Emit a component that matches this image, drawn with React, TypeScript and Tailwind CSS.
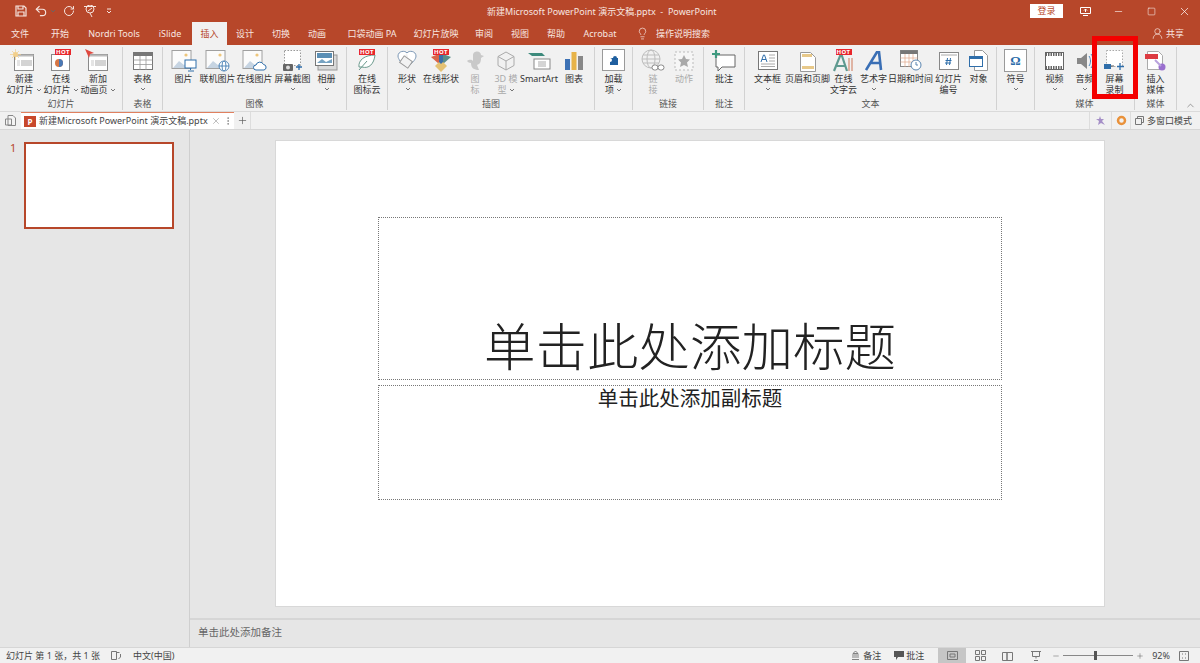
import type { ReactNode } from "react";
import { X, Minus, Square, Plus, Undo2, RotateCw, Lightbulb, UserRound, ChevronUp, MoreVertical } from "lucide-react";

function Chev() {
  return (
    <svg width="6" height="4" viewBox="0 0 6 4" className="inline-block ml-[2px] align-middle">
      <path d="M1 1l2 2 2-2" fill="none" stroke="#666" strokeWidth="0.9" />
    </svg>
  );
}

function Hot({ className }: { className: string }) {
  return (
    <span className={`absolute h-[6px] w-[16px] bg-[#e8262b] text-white text-[6px] leading-[6px] font-bold text-center tracking-[0.5px] ${className}`}>
      HOT
    </span>
  );
}

function Item({ w, lines, icon, chev, dim }: { w: string; lines: string[]; icon: ReactNode; chev?: "inline" | "below"; dim?: boolean }) {
  return (
    <div className={`${w} flex flex-col items-center`}>
      <div className="relative h-[24px] flex items-center justify-center">{icon}</div>
      <div className={`text-[9px] leading-[11px] text-center whitespace-nowrap ${dim ? "text-[#aaa]" : "text-[#333]"}`}>
        {lines.map((l, i) => (
          <div key={i}>
            {l}
            {chev === "inline" && i === lines.length - 1 && <Chev />}
          </div>
        ))}
        {chev === "below" && (
          <div className="leading-[9px]">
            <Chev />
          </div>
        )}
      </div>
    </div>
  );
}

function Group({ w, label, children }: { w: string; label: string; children: ReactNode }) {
  return (
    <div className={`${w} h-[63px] my-auto flex flex-col border-r border-[#d2d2d2] shrink-0`}>
      <div className="h-[50px] pt-[2px] flex justify-center">{children}</div>
      <div className="text-[9px] leading-[13px] text-center text-[#555] pt-[1px]">{label}</div>
    </div>
  );
}

const Slide = ({ accent = "#d4d4d4" }: { accent?: string }) => (
  <svg width="22" height="24" viewBox="0 0 22 24">
    <rect x="1.500" y="5.500" width="19" height="16" fill="#fff" stroke="#8a8a8a" />
    <rect x="1.500" y="5.500" width="19" height="2" fill="#bbb" />
    <rect x="8" y="11" width="11" height="6" fill={accent} />
    <path d="M4 12h3M4 14h3M4 16h3" stroke="#bbb" strokeWidth=".8" />
  </svg>
);

const Pic = ({ badge }: { badge?: ReactNode }) => (
  <svg width="26" height="24" viewBox="0 0 26 24">
    <rect x="1" y="1.500" width="19" height="18" fill="#fbfbfb" stroke="#a0a0a0" />
    <path d="M2 19l6-7 5 4 3-2 4 5z" fill="#c6d4e2" />
    <circle cx="15" cy="6" r="1.600" fill="#eec67c" />
    {badge}
  </svg>
);

export default function App() {
  const tabs: [string, string][] = [
    ["w-[40px]", "文件"],
    ["w-[40px]", "开始"],
    ["w-[68px]", "Nordri Tools"],
    ["w-[44px]", "iSlide"],
  ];
  const tabs2: [string, string][] = [
    ["w-[36px]", "设计"],
    ["w-[36px]", "切换"],
    ["w-[36px]", "动画"],
    ["w-[74px]", "口袋动画 PA"],
    ["w-[54px]", "幻灯片放映"],
    ["w-[42px]", "审阅"],
    ["w-[30px]", "视图"],
    ["w-[42px]", "帮助"],
    ["w-[46px]", "Acrobat"],
  ];

  return (
    <div className="relative w-[1200px] h-[663px] overflow-hidden flex flex-col bg-[#e6e6e6] font-['Noto_Sans','Noto_Sans_CJK_SC',sans-serif]">
      {/* title bar */}
      <div className="h-[22px] bg-[#b7472a] text-white flex items-center shrink-0">
        <div className="w-[487px] flex items-center text-[#f6e5df]">
          <svg width="12" height="12" viewBox="0 0 12 12" className="ml-[15px]">
            <path d="M1 1h8l2 2v8H1zM3 1v3h5V1M3 11V7h6v4" fill="none" stroke="currentColor" strokeWidth="1.200" />
          </svg>
          <Undo2 size={14} strokeWidth={2} className="ml-[7px]" />
          <Chev />
          <RotateCw size={12} strokeWidth={2} className="ml-[7px]" />
          <svg width="14" height="13" viewBox="0 0 14 13" className="ml-[8px]">
            <path d="M1 1.500h12M3 4a4 4 0 0 1 8 0 4 4 0 0 1-4 4 4 4 0 0 1-4-4zM7 8l2 4M5 6l4-3" fill="none" stroke="currentColor" strokeWidth="1" />
          </svg>
          <svg width="6" height="6" viewBox="0 0 6 6" className="ml-[9px]">
            <path d="M1 1h4M1 3l2 2 2-2" fill="none" stroke="currentColor" />
          </svg>
        </div>
        <div className="text-[9px] leading-none text-[#f8e6e0] whitespace-pre">新建Microsoft PowerPoint 演示文稿.pptx  -  PowerPoint</div>
        <div className="ml-auto flex items-center">
          <div className="w-[33px] h-[14px] bg-white text-[#b7472a] text-[9px] leading-[14px] text-center">登录</div>
          <svg width="11" height="9" viewBox="0 0 11 9" className="ml-[17px]">
            <path d="M.5.500h10v6H.5zM5.500 5V2M4 3.500l1.500-1.500L7 3.500M3 8.500h5" fill="none" stroke="#fff" />
          </svg>
          <Minus size={11} strokeWidth={1.300} className="ml-[22px]" />
          <Square size={9} strokeWidth={1.400} className="ml-[23px]" />
          <X size={13} strokeWidth={1.300} className="ml-[22px] mr-[9px]" />
        </div>
      </div>

      {/* tabs */}
      <div className="h-[23px] bg-[#b7472a] flex items-stretch text-[9px] text-[#f8e6e0] shrink-0">
        {tabs.map(([w, t]) => (
          <div key={t} className={`${w} flex items-center justify-center`}>{t}</div>
        ))}
        <div className="w-[35px] bg-[#f1f1f1] text-[#b7472a] flex items-center justify-center">插入</div>
        {tabs2.map(([w, t]) => (
          <div key={t} className={`${w} flex items-center justify-center`}>{t}</div>
        ))}
        <div className="flex items-center ml-[13px]">
          <Lightbulb size={13} strokeWidth={1.300} />
          <span className="ml-[7px]">操作说明搜索</span>
        </div>
        <div className="ml-auto flex items-center mr-[16px]">
          <UserRound size={13} strokeWidth={1.300} />
          <span className="ml-[2px]">共享</span>
        </div>
      </div>

      {/* ribbon */}
      <div className="h-[67px] bg-[#f1f1f1] border-b border-[#dadada] flex items-stretch relative shrink-0">
        <Group w="w-[123px]" label="幻灯片">
          <Item w="w-[37px]" lines={["新建", "幻灯片"]} chev="inline" icon={
            <div className="relative"><Slide /><svg width="11" height="11" viewBox="0 0 11 11" className="absolute -left-[3px] top-0"><circle cx="5.500" cy="5.500" r="2.500" fill="#f2cf8a" /><path d="M5.500 0v11M0 5.500h11M2 2l7 7M9 2l-7 7" stroke="#f2cf8a" strokeWidth=".7" /></svg></div>
          } />
          <Item w="w-[37px]" lines={["在线", "幻灯片"]} chev="inline" icon={
            <div className="relative"><svg width="22" height="24" viewBox="0 0 22 24"><rect x="1.500" y="5.500" width="18" height="16" fill="#fff" stroke="#8a8a8a" /><circle cx="9" cy="14" r="4" fill="#d77745" /><path d="M9 14V10a4 4 0 0 1 0 8z" fill="#4a79b5" /></svg><Hot className="left-[5px] top-0" /></div>
          } />
          <Item w="w-[37px]" lines={["新加", "动画页"]} chev="inline" icon={
            <div className="relative"><Slide /><svg width="10" height="10" viewBox="0 0 10 10" className="absolute -left-[2px] top-0"><path d="M0 0l9 4-4 1-1 4z" fill="#e0483f" /></svg></div>
          } />
        </Group>
        <Group w="w-[40px]" label="表格">
          <Item w="w-[36px]" lines={["表格"]} chev="below" icon={
            <svg width="20" height="18" viewBox="0 0 20 18"><rect x=".5" y=".5" width="19" height="17" fill="#fff" stroke="#777" /><rect x=".5" y=".5" width="19" height="3.500" fill="#777" /><path d="M.5 8h19M.5 12.500h19M7 4v14M13 4v14" stroke="#999" strokeWidth=".8" /></svg>
          } />
        </Group>
        <Group w="w-[184px]" label="图像">
          <Item w="w-[32px]" lines={["图片"]} icon={<Pic badge={<g><rect x="14" y="11" width="11" height="8" fill="#fff" stroke="#2f6eaa" /><path d="M19.500 19v2M17 22h6" stroke="#2f6eaa" /></g>} />} />
          <Item w="w-[36px]" lines={["联机图片"]} icon={<Pic badge={<g fill="#fff" stroke="#2f6eaa" strokeWidth=".8"><circle cx="19" cy="17" r="5" /><ellipse cx="19" cy="17" rx="2" ry="5" /><path d="M14 17h10" /></g>} />} />
          <Item w="w-[38px]" lines={["在线图片"]} icon={<Pic badge={<path d="M14 21a2.500 2.500 0 0 1 0-5 4 4 0 0 1 7.500-.5 2.800 2.800 0 0 1 .5 5.500z" fill="#fff" stroke="#2f6eaa" />} />} />
          <Item w="w-[38px]" lines={["屏幕截图"]} chev="below" icon={
            <svg width="22" height="24" viewBox="0 0 22 24"><rect x="2.500" y="1.500" width="16" height="15" fill="#fff" stroke="#999" strokeDasharray="1.500 1.500" /><rect x="1" y="15" width="10" height="7" rx="1" fill="#666" /><circle cx="6" cy="18.500" r="2" fill="#ddd" /><path d="M17 15v6M14 18h6" stroke="#2f6eaa" strokeWidth="1.300" /></svg>
          } />
          <Item w="w-[30px]" lines={["相册"]} chev="below" icon={
            <svg width="23" height="20" viewBox="0 0 23 20"><rect x="3" y="4" width="19" height="15" fill="#d9d9d9" stroke="#999" /><rect x=".5" y=".5" width="18" height="14" fill="#fff" stroke="#777" /><rect x="2" y="2" width="15" height="5" fill="#5b8fb5" /><path d="M2 12l5-4 4 3 6-3v4H2z" fill="#77a3c2" /></svg>
          } />
        </Group>
        <Group w="w-[41px]" label="">
          <Item w="w-[40px]" lines={["在线", "图标云"]} icon={
            <div className="relative"><svg width="22" height="24" viewBox="0 0 22 24"><path d="M3 18c-1-7 6-12 16-12-1 9-6 14-13 12zM3 21l8-9" fill="#fff" stroke="#6b9a8d" /></svg><Hot className="left-[3px] top-0" /></div>
          } />
        </Group>
        <Group w="w-[207px]" label="插图">
          <Item w="w-[32px]" lines={["形状"]} chev="below" icon={
            <svg width="22" height="21" viewBox="0 0 22 21"><path d="M11 3c2-3 9-2 9 3 0 3-3 6-6 9" fill="#fff" stroke="#7b97b5" /><path d="M11 3C9 0 2 1 2 6c0 2 1 3 2 5" fill="#fff" stroke="#7b97b5" /><rect x="5" y="8" width="10" height="8" transform="rotate(35 10 12)" fill="#f2f2f2" stroke="#999" /></svg>
          } />
          <Item w="w-[36px]" lines={["在线形状"]} icon={
            <div className="relative"><svg width="22" height="24" viewBox="0 0 22 24"><path d="M1 8l8-3v10z" fill="#d9644a" /><path d="M13 5l8 3-8 7z" fill="#5c8d89" /><path d="M11 11l6 6-6 6-6-6z" fill="#e4c173" /><path d="M9 5h4v8l-2 2-2-2z" fill="#3c6ea8" /></svg><Hot className="left-[3px] top-0" /></div>
          } />
          <Item w="w-[32px]" dim lines={["图", "标"]} icon={
            <svg width="20" height="22" viewBox="0 0 20 22"><path d="M2 11c3-2 5-1 6 0V6a4 4 0 0 1 8-1l3 1-3 2c0 4-1 6-4 7l2 5c-5 0-8-2-8-7-2 0-3-1-4-2z" fill="#c9c9c9" /></svg>
          } />
          <Item w="w-[30px]" dim lines={["3D 模", "型"]} chev="inline" icon={
            <svg width="20" height="20" viewBox="0 0 20 20"><path d="M10 1l8 4.500v9L10 19l-8-4.500v-9zM2 5.500l8 4.500 8-4.500M10 10v9" fill="none" stroke="#aaa" /></svg>
          } />
          <Item w="w-[36px]" lines={["SmartArt"]} icon={
            <svg width="24" height="20" viewBox="0 0 24 20"><path d="M1 2h14l3 3H5z" fill="#3d8a7c" /><rect x="7" y="8" width="16" height="10" fill="#fff" stroke="#8a8a8a" /><path d="M11 11h8M11 13h8M11 15h8" stroke="#aaa" /></svg>
          } />
          <Item w="w-[34px]" lines={["图表"]} icon={
            <svg width="18" height="20" viewBox="0 0 18 20"><rect x="0" y="8" width="5" height="11" fill="#3d72b5" /><rect x="6.500" y="1" width="5" height="18" fill="#e7b348" /><rect x="13" y="5" width="5" height="14" fill="#888" /></svg>
          } />
        </Group>
        <Group w="w-[38px]" label="">
          <Item w="w-[34px]" lines={["加载", "项"]} chev="inline" icon={
            <svg width="24" height="23" viewBox="0 0 24 23"><rect x=".5" y=".5" width="22" height="21" fill="#fff" stroke="#9a9a9a" /><path d="M8 9h3a2 2 0 0 1 4 0h1v7H8v-3a2 2 0 0 0 0-4z" fill="#1f5f9f" /></svg>
          } />
        </Group>
        <Group w="w-[71px]" label="链接">
          <Item w="w-[32px]" dim lines={["链", "接"]} icon={
            <svg width="24" height="23" viewBox="0 0 24 23"><g fill="none" stroke="#bdbdbd"><circle cx="10" cy="10" r="9" /><ellipse cx="10" cy="10" rx="4" ry="9" /><path d="M1 10h18M2 6h16M2 14h16" /></g><rect x="11" y="16" width="6" height="5" rx="2.500" fill="#fff" stroke="#888" /><rect x="17" y="16" width="6" height="5" rx="2.500" fill="#fff" stroke="#888" /></svg>
          } />
          <Item w="w-[30px]" dim lines={["动作"]} icon={
            <svg width="20" height="20" viewBox="0 0 20 20"><rect x="1" y="1" width="18" height="18" fill="#f6f6f6" stroke="#bbb" strokeDasharray="2 2" /><path d="M10 4l2 4 4 .500-3 3 1 4.500-4-2-4 2 1-4.500-3-3 4-.500z" fill="#a9a9a9" /></svg>
          } />
        </Group>
        <Group w="w-[41px]" label="批注">
          <Item w="w-[40px]" lines={["批注"]} icon={
            <svg width="24" height="22" viewBox="0 0 24 22"><path d="M4 5h19v12H10l-4 4v-4H4z" fill="#fff" stroke="#666" /><path d="M4 0v8M0 4h8" stroke="#3f9a80" strokeWidth="2.200" /></svg>
          } />
        </Group>
        <Group w="w-[252px]" label="文本">
          <Item w="w-[34px]" lines={["文本框"]} chev="below" icon={
            <svg width="20" height="19" viewBox="0 0 20 19"><rect x=".5" y=".5" width="19" height="18" fill="#fff" stroke="#777" /><path d="M3 11l2.500-7h1l2.500 7M4 8.500h4" fill="none" stroke="#2f6eaa" /><path d="M11 4h6M11 7h6M11 10h6M3 13h14M3 15.500h14" stroke="#aaa" /></svg>
          } />
          <Item w="w-[46px]" lines={["页眉和页脚"]} icon={
            <svg width="16" height="22" viewBox="0 0 16 22"><path d="M.5 2.500h10l5 5v14H.5z" fill="#fff" stroke="#999" /><rect x="2" y="4" width="10" height="3" fill="#e8c98a" /><rect x="2" y="16" width="12" height="3" fill="#e8c98a" /></svg>
          } />
          <Item w="w-[26px]" lines={["在线", "文字云"]} icon={
            <div className="relative"><svg width="22" height="24" viewBox="0 0 22 24"><path d="M1 22l6-15h2l5 15M4 17h8" fill="none" stroke="#5f9a90" strokeWidth="2.200" /><path d="M16 9v13M19 9v13" stroke="#d9a08a" strokeWidth="1.500" /></svg><Hot className="left-[3px] top-0" /></div>
          } />
          <Item w="w-[34px]" lines={["艺术字"]} chev="below" icon={
            <svg width="18" height="20" viewBox="0 0 18 20"><path d="M1 19L12 1h2l2 18M5 12h10" fill="none" stroke="#3a6fb5" strokeWidth="2.600" /></svg>
          } />
          <Item w="w-[40px]" lines={["日期和时间"]} icon={
            <svg width="22" height="21" viewBox="0 0 22 21"><rect x=".5" y=".5" width="17" height="16" fill="#fff" stroke="#888" /><rect x=".5" y=".5" width="17" height="3.500" fill="#777" /><path d="M.5 8h17M.5 12h17M5 4v13M9 4v13M13 4v13" stroke="#e0a88a" strokeWidth=".7" /><circle cx="16" cy="15" r="5" fill="#fff" stroke="#5a85b0" /><path d="M16 12v3h2" fill="none" stroke="#5a85b0" /></svg>
          } />
          <Item w="w-[36px]" lines={["幻灯片", "编号"]} icon={
            <svg width="20" height="18" viewBox="0 0 20 18"><rect x=".5" y=".5" width="19" height="17" fill="#fff" stroke="#888" /><path d="M2 3h16" stroke="#aaa" /><path d="M8.500 6l-1 7M11.500 6l-1 7M6.500 8.500h6M6 11h6" fill="none" stroke="#2f6eaa" /></svg>
          } />
          <Item w="w-[24px]" lines={["对象"]} icon={
            <svg width="19" height="21" viewBox="0 0 19 21"><path d="M5.500.5h8l5 5v15h-13z" fill="#fff" stroke="#999" /><rect x=".5" y="6.500" width="13" height="10" fill="#fff" stroke="#2f6eaa" /><rect x=".5" y="6.500" width="13" height="2.500" fill="#2f6eaa" /></svg>
          } />
        </Group>
        <Group w="w-[38px]" label="">
          <Item w="w-[34px]" lines={["符号"]} chev="below" icon={
            <div className="w-[23px] h-[23px] bg-white border border-[#9a9a9a] text-[#2a6ca8] text-[13px] font-bold leading-[21px] text-center font-['Liberation_Serif',serif]">Ω</div>
          } />
        </Group>
        <Group w="w-[100px]" label="媒体">
          <Item w="w-[30px]" lines={["视频"]} chev="below" icon={
            <svg width="19" height="18" viewBox="0 0 19 18"><rect x=".5" y=".5" width="18" height="17" fill="#fff" stroke="#666" /><path d="M.5 2.500h18M.5 15.500h18" stroke="#666" strokeWidth="3" strokeDasharray="1.500 1" /></svg>
          } />
          <Item w="w-[30px]" lines={["音频"]} chev="below" icon={
            <svg width="18" height="20" viewBox="0 0 18 20"><path d="M1 7h4l6-5v16l-6-5H1z" fill="#888" /><path d="M13 5c2 3 2 7 0 10M15 3c3 4 3 10 0 14" fill="none" stroke="#4a85bd" /></svg>
          } />
          <Item w="w-[30px]" lines={["屏幕", "录制"]} icon={
            <svg width="22" height="24" viewBox="0 0 22 24"><rect x="2.500" y="1.500" width="16" height="16" fill="#fff" stroke="#aaa" strokeDasharray="1.500 1.500" /><rect x="0" y="15" width="7" height="5" fill="#2f6eaa" /><path d="M7 17h3" stroke="#555" /><path d="M16 14v7M13 17.500h7" stroke="#2f6eaa" strokeWidth="1.300" /></svg>
          } />
        </Group>
        <Group w="w-[42px]" label="媒体">
          <Item w="w-[40px]" lines={["插入", "媒体"]} icon={
            <svg width="24" height="24" viewBox="0 0 24 24"><path d="M3.500 2.500h11l4 4v14h-15z" fill="#fff" stroke="#aaa" /><rect x="1" y="5" width="13" height="5" fill="#dd3b42" /><circle cx="18" cy="18" r="3.500" fill="#9a6fcf" /><path d="M11 11l6 6" stroke="#b9a2dd" strokeWidth="2" /></svg>
          } />
        </Group>
        <ChevronUp size={11} strokeWidth={1.200} className="text-[#555] ml-[8px] mt-[55px]" />
        {/* red highlight box, drawn over the ribbon */}
        <div className="absolute left-[1092px] -top-[9px] w-[46px] h-[63px] border-[5px] border-[#f40000]" />
      </div>

      {/* document tab bar */}
      <div className="h-[18px] bg-[#f1f1f1] border-b border-[#d6d6d6] flex items-stretch text-[9px] text-[#444] shrink-0">
        <div className="w-[21px] flex items-center justify-center">
          <svg width="11" height="11" viewBox="0 0 11 11"><path d="M3 .5h5l2.500 2.500v7.500H3zM.5 4h6v6h-6z" fill="#f4f4f4" stroke="#888" /></svg>
        </div>
        <div className="w-[213px] bg-white border-t border-[#e0805f] flex items-center">
          <span className="shrink-0 ml-[3px] w-[12px] h-[11px] bg-[#c8482b] text-white text-[8px] leading-[11px] font-bold text-center">P</span>
          <span className="ml-[3px] whitespace-pre">新建Microsoft PowerPoint 演示文稿.pptx</span>
          <X size={10} strokeWidth={1} className="shrink-0 ml-[3px] text-[#666]" />
          <MoreVertical size={10} strokeWidth={1.400} className="shrink-0 ml-[2px] text-[#666]" />
        </div>
        <div className="w-[17px] flex items-center justify-center border-r border-[#ddd]">
          <Plus size={11} strokeWidth={1.400} className="text-[#555]" />
        </div>
        <div className="ml-auto flex items-stretch">
          <div className="w-[22px] border-l border-[#ddd] flex items-center justify-center">
            <svg width="11" height="11" viewBox="0 0 11 11"><path d="M5 1l1 3 3 0-2 2 3 4-4-2-3 2 1-4-3-2 3 0z" fill="#a58fc7" /></svg>
          </div>
          <div className="w-[19px] border-l border-[#ddd] flex items-center justify-center">
            <svg width="11" height="11" viewBox="0 0 11 11"><circle cx="5.500" cy="5.500" r="3.500" fill="none" stroke="#e9913a" strokeWidth="2.500" /></svg>
          </div>
          <div className="w-[70px] border-l border-[#ddd] flex items-center pl-[4px]">
            <svg width="9" height="9" viewBox="0 0 9 9"><path d="M.5 2.500h6v6h-6zM2.500 2.500v-2h6v6h-2" fill="none" stroke="#777" /></svg>
            <span className="ml-[3px]">多窗口模式</span>
          </div>
        </div>
      </div>

      {/* main area */}
      <div className="flex-1 flex min-h-0">
        <div className="w-[190px] border-r border-[#cfcfcf] pl-[10px] pt-[12px] flex shrink-0">
          <span className="w-[14px] text-[11px] leading-[12px] text-[#b7472a]">1</span>
          <div className="w-[150px] h-[87px] bg-white border-2 border-[#b7472a]" />
        </div>
        <div className="flex-1 flex flex-col min-w-0">
          <div className="flex-1 pl-[85px] pt-[10px]">
            <div className="w-[830px] h-[467px] bg-white border border-[#d8d8d8] px-[102px] pt-[76px]">
              <div className="h-[163px] border border-dotted border-[#777] flex items-end justify-center text-[51.500px] leading-[64px] font-light text-[#222] pb-[1px]">
                单击此处添加标题
              </div>
              <div className="h-[115px] mt-[5px] border border-dotted border-[#777] text-center text-[20.500px] leading-[24px] text-[#222]">
                单击此处添加副标题
              </div>
            </div>
          </div>
          <div className="h-[29px] border-t-2 border-[#d6d6d6] pl-[8px] text-[10.500px] leading-[24px] text-[#666]">
            单击此处添加备注
          </div>
        </div>
      </div>

      {/* status bar */}
      <div className="h-[16px] bg-[#f1f1f1] border-t border-[#d6d6d6] flex items-center text-[9px] text-[#444] shrink-0">
        <span className="ml-[6px]">幻灯片 第 1 张，共 1 张</span>
        <svg width="11" height="10" viewBox="0 0 11 10" className="ml-[11px]"><path d="M.5.500h5v8h-5zM5.500 1.500h3M9.500 3v3l-2 2" fill="none" stroke="#777" /></svg>
        <span className="ml-[11px]">中文(中国)</span>
        <div className="ml-auto flex items-center h-full">
          <svg width="9" height="9" viewBox="0 0 9 9"><path d="M1 8.500h7M1 6h7M1 4h7M4.500 0L2 2.500h5z" stroke="#666" fill="none" strokeWidth=".8" /></svg>
          <span className="ml-[3px]">备注</span>
          <svg width="10" height="9" viewBox="0 0 10 9" className="ml-[13px]"><path d="M0 0h10v6H4L2 9V6H0z" fill="#555" /></svg>
          <span className="ml-[2px]">批注</span>
          <div className="ml-[14px] w-[28px] h-full bg-[#c6c6c6] flex items-center justify-center">
            <svg width="11" height="9" viewBox="0 0 11 9"><path d="M.5.500h10v8H.5zM3 3h5v3H3z" fill="none" stroke="#777" /></svg>
          </div>
          <svg width="11" height="11" viewBox="0 0 11 11" className="ml-[9px]"><path d="M.5.500h4v4h-4zM6.500.500h4v4h-4zM.5 6.500h4v4h-4zM6.500 6.500h4v4h-4z" fill="none" stroke="#777" /></svg>
          <svg width="11" height="10" viewBox="0 0 11 10" className="ml-[16px]"><path d="M.5 1.500h4.500v8H.5zM5 1.500h5.500v8H5z" fill="none" stroke="#777" /></svg>
          <svg width="10" height="10" viewBox="0 0 10 10" className="ml-[18px]"><path d="M0 .5h10M1.500.5v5h7v-5M5 5.500v2M3 9.500h4" fill="none" stroke="#777" /></svg>
          <Minus size={8} strokeWidth={1.400} className="ml-[11px] text-[#555]" />
          <div className="ml-[3px] w-[70px] h-[1px] bg-[#888] relative">
            <div className="absolute left-[31px] -top-[4px] w-[3px] h-[9px] bg-[#555]" />
          </div>
          <Plus size={8} strokeWidth={1.400} className="ml-[3px] text-[#555]" />
          <span className="ml-[8px]">92%</span>
          <svg width="10" height="10" viewBox="0 0 10 10" className="ml-[9px] mr-[11px]"><path d="M.5.500h9v9h-9zM3 3h1M6 3h1M3 7h1M6 7h1" fill="none" stroke="#777" /></svg>
        </div>
      </div>
    </div>
  );
}
